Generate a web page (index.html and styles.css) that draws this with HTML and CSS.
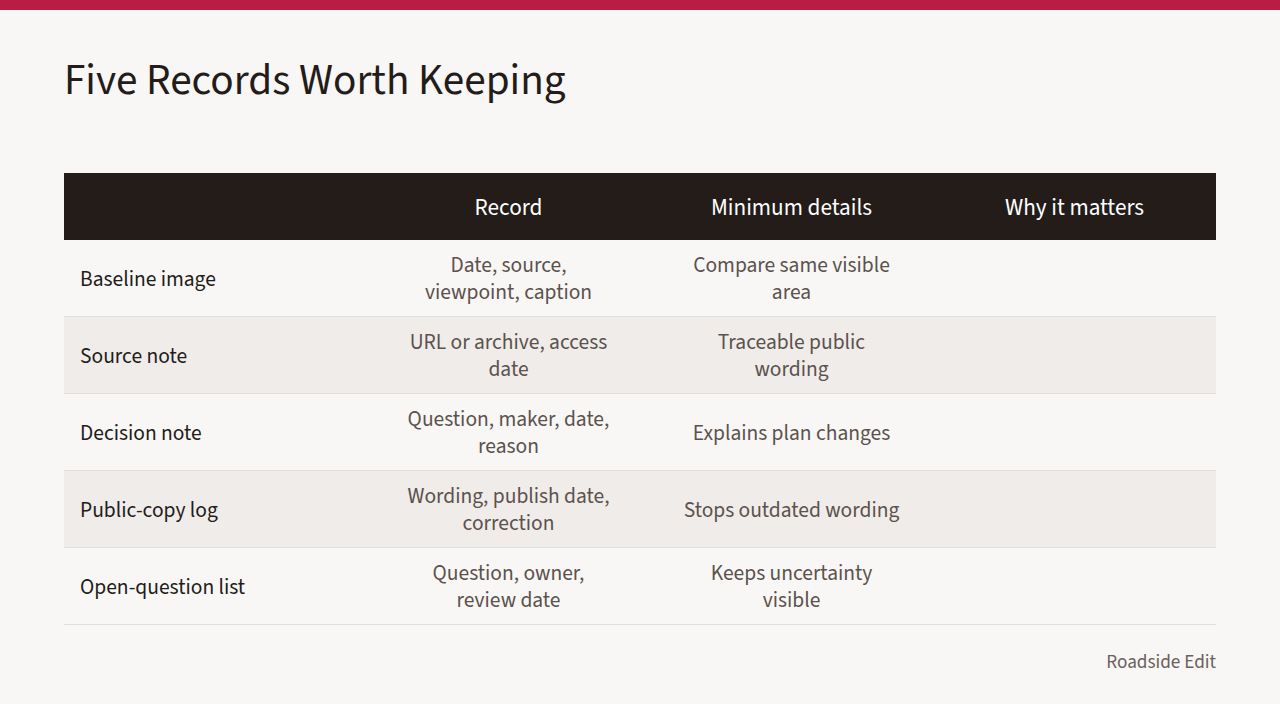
FILE: index.html
```html
<!DOCTYPE html>
<html lang="en">
<head>
<meta charset="utf-8">
<title>Five Records Worth Keeping</title>
<link rel="stylesheet" href="styles.css">
</head>
<body>
<div class="topbar"></div>
<main class="slide">
  <h1 class="title">Five Records Worth Keeping</h1>
  <table class="records">
    <colgroup>
      <col class="c1"><col class="c2"><col class="c3"><col class="c4">
    </colgroup>
    <thead>
      <tr><th></th><th>Record</th><th>Minimum details</th><th>Why it matters</th></tr>
    </thead>
    <tbody>
      <tr><td class="name">Baseline image</td><td>Date, source,<br>viewpoint, caption</td><td>Compare same visible<br>area</td><td></td></tr>
      <tr><td class="name">Source note</td><td>URL or archive, access<br>date</td><td>Traceable public<br>wording</td><td></td></tr>
      <tr><td class="name">Decision note</td><td>Question, maker, date,<br>reason</td><td>Explains plan changes</td><td></td></tr>
      <tr><td class="name">Public-copy log</td><td>Wording, publish date,<br>correction</td><td>Stops outdated wording</td><td></td></tr>
      <tr><td class="name">Open-question list</td><td>Question, owner,<br>review date</td><td>Keeps uncertainty<br>visible</td><td></td></tr>
    </tbody>
  </table>
  <footer class="footer">Roadside Edit</footer>
</main>
</body>
</html>
```
FILE: styles.css
```css
html, body {
  margin: 0;
  padding: 0;
}
body {
  background: #f8f7f5;
  font-family: "Source Sans 3", "Source Sans Pro", Lato, "Noto Sans", sans-serif;
  color: #231c19;
  width: 1280px;
  height: 704px;
  overflow: hidden;
}
.topbar {
  height: 10px;
  background: #b91c45;
}
.slide {
  padding: 0 64px;
}
.title {
  margin: 0;
  padding-top: 43px;
  height: 121px;
  box-sizing: border-box;
  font-size: 43.2px;
  font-weight: 400;
  line-height: 56px;
  color: #231c19;
}
.records {
  margin-top: 42px;
  width: 1152px;
  border-collapse: collapse;
  table-layout: fixed;
}
.c1 { width: 303px; }
.c2 { width: 283px; }
.c3 { width: 283px; }
.c4 { width: 283px; }
.records th {
  background: #231c19;
  color: #ffffff;
  font-weight: 400;
  font-size: 23.2px;
  height: 65px;
  padding: 2px 16px 0;
  text-align: center;
}
.records td {
  height: 74px;
  padding: 2px 16px 0;
  font-size: 21.5px;
  line-height: 27px;
  text-align: center;
  color: #5c524d;
  border-bottom: 1px solid #e2dedb;
}
.records tbody tr:nth-child(even) td {
  background: #efecea;
}
.records td.name {
  text-align: left;
  color: #231c19;
}
.footer {
  text-align: right;
  margin-top: 23px;
  font-size: 19.2px;
  color: #6b605b;
}
```
